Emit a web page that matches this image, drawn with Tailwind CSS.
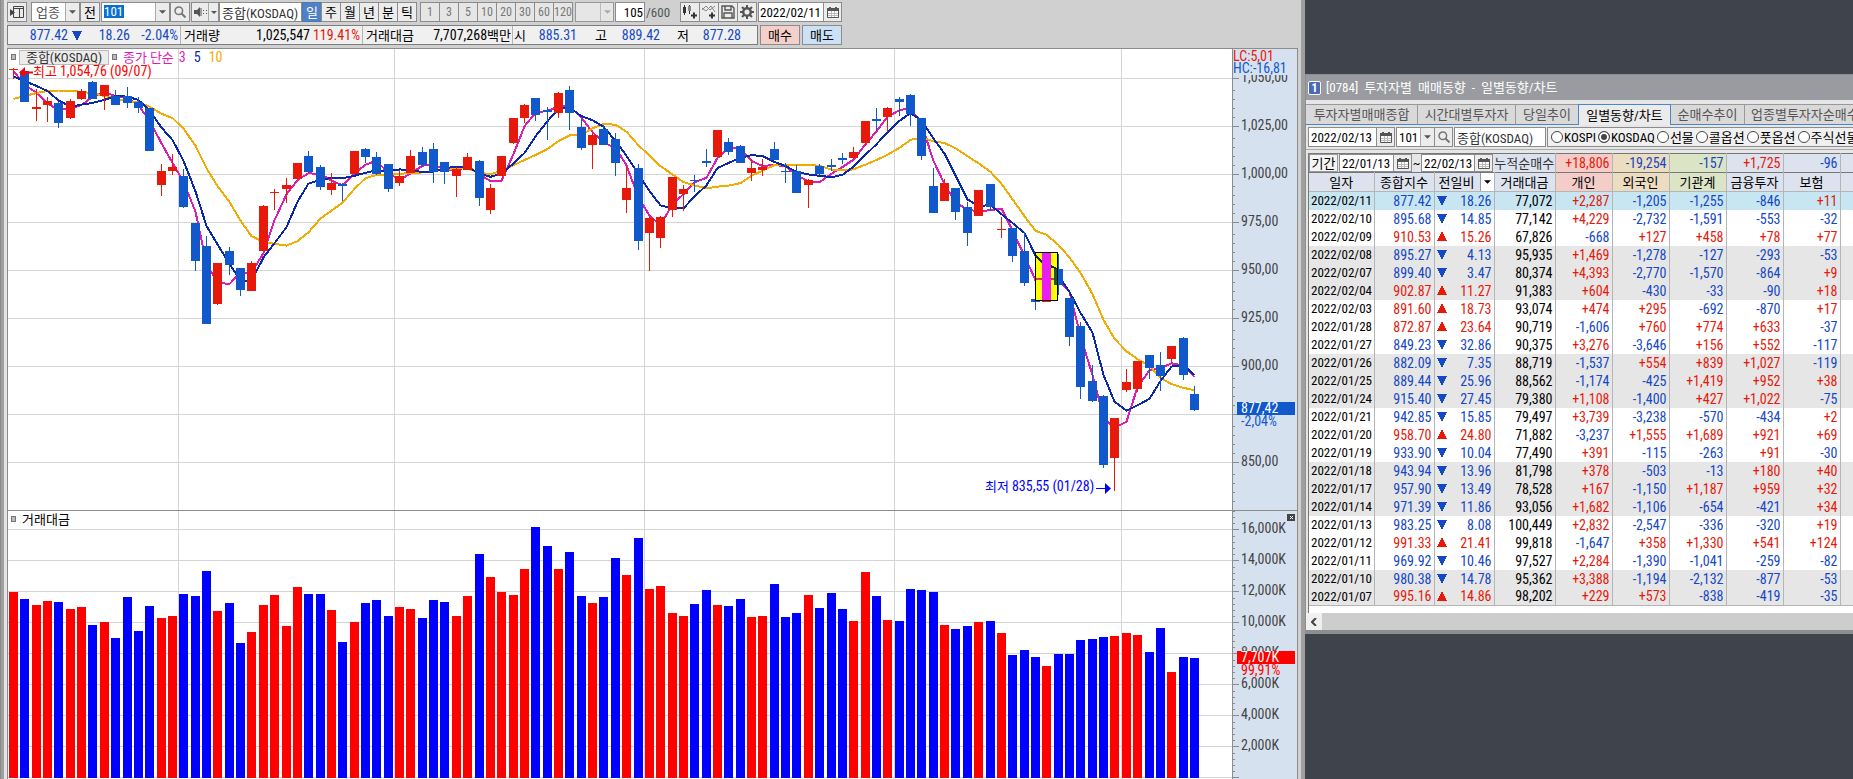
<!DOCTYPE html>
<html lang="ko">
<head>
<meta charset="utf-8">
<title>종합(KOSDAQ)</title>
<script src="https://cdn.jsdelivr.net/npm/@tailwindcss/browser@4"></script>
</head>
<body class="flex min-h-screen overflow-hidden bg-[#3f434c] font-['Liberation_Sans_Narrow','Roboto_Condensed','Noto_Sans_CJK_KR',sans-serif] text-[13px] leading-none text-black">

<svg class="hidden">
  <defs>
    <symbol id="cal" viewBox="0 0 12 11"><path d="M.5 1.500h11v9H.5z" fill="#fff" stroke="#555"/><path d="M0 1h12v3H0z" fill="#555"/><path d="M2 0h2v2H2zM8 0h2v2H8z" fill="#555"/><path d="M1 6.500h10M1 8.500h10M4.500 4v6M7.500 4v6" stroke="#bbb"/></symbol>
    <symbol id="mag" viewBox="0 0 12 12"><circle cx="4.800" cy="4.800" r="3.800" fill="none" stroke="#777" stroke-width="1.500"/><path d="M7.500 7.500l4 4" stroke="#777" stroke-width="2"/></symbol>
    <symbol id="down" viewBox="0 0 8 4"><path d="M0 0h8L4 4z" fill="currentColor"/></symbol>
    <symbol id="tdown" viewBox="0 0 10 9"><path d="M0 0h10v1H9v2H8v2H7v2H6v2H4V7H3V5H2V3H1V1H0z" fill="#1548c4"/></symbol>
    <symbol id="tup" viewBox="0 0 10 9"><path d="M0 9h10V8H9V6H8V4H7V2H6V0H4v2H3v2H2v2H1v2H0z" fill="#e6190a"/></symbol>
  </defs>
</svg>

<main class="flex min-w-0 flex-1 flex-col border-l border-[#8a8a8a] bg-[#d0d0d0]">
  <div class="flex min-h-screen flex-1 border-r-4 border-l-3 border-[#a09f9f]">
  <div class="flex min-w-0 flex-1 flex-col border-l-3 border-[#e4e4e4]">

    <div class="flex h-[22px] items-end">
      <button aria-label="창 목록" class="grid h-5 w-5 shrink-0 place-items-center border border-[#8c8c8c] bg-[#ececec]"><svg class="h-3 w-[14px]" viewBox="0 0 14 12"><path d="M3.500.500h10v11h-10zM3.500 2.500h10M9.500 3v8" fill="none" stroke="#444"/><path d="M0 3l5 3.500L0 10z" fill="#444"/></svg></button>
      <div class="relative ml-1 h-5 w-[49px] shrink-0">
        <select aria-label="종류" class="h-full w-full appearance-none border border-[#8c8c8c] bg-white pl-1 text-[#555]"><option>업종</option></select>
        <span class="pointer-events-none absolute inset-y-px right-px grid w-[14px] place-items-center border-l border-[#aaa] bg-[#ececec] text-[#555]"><svg class="h-1 w-[7px]"><use href="#down"/></svg></span>
      </div>
      <button class="h-5 w-5 shrink-0 border border-[#8c8c8c] bg-[#ececec]">전</button>
      <div class="relative ml-px flex h-5 w-[69px] shrink-0 border border-[#8c8c8c] bg-white">
        <input id="code" aria-label="업종 코드" value="101" class="mt-[2px] ml-[2px] h-[13px] w-5 bg-[#0a70d0] text-white">
        <button aria-label="코드 목록" class="ml-auto grid w-[14px] place-items-center border-l border-[#aaa] bg-[#ececec] text-[#555]"><svg class="h-1 w-[7px]"><use href="#down"/></svg></button>
      </div>
      <button aria-label="검색" class="grid h-5 w-5 shrink-0 place-items-center border border-[#8c8c8c] bg-[#ececec]"><svg class="size-3"><use href="#mag"/></svg></button>
      <button aria-label="소리" class="ml-px flex h-5 w-[28px] shrink-0 items-center border border-[#8c8c8c] bg-[#ececec] pl-[2px] text-[#555]"><svg class="h-3 w-[14px] shrink-0" viewBox="0 0 14 12"><path d="M0 4h3l3-3v10L3 8H0z" fill="#555"/><path d="M7 2v8" stroke="#555"/><path d="M9 4h1v1H9zM12 4h1v1h-1zM9 7h1v1H9zM12 7h1v1h-1z" fill="#555"/></svg><span class="grid h-full flex-1 place-items-center border-l border-[#aaa]"><svg class="h-[3px] w-[6px]"><use href="#down"/></svg></span></button>
      <input aria-label="종목명" value="종합(KOSDAQ)" class="h-5 w-[83px] shrink-0 border border-[#8c8c8c] bg-white pl-[2px] text-[#333]">
      <div id="periods" class="flex shrink-0"></div>
      <div id="mins" class="ml-[4px] flex shrink-0"></div>
      <div class="relative ml-[3px] h-5 w-[39px] shrink-0">
        <select aria-label="사용자 주기" disabled class="h-full w-full appearance-none border border-[#999] bg-[#e6e6e6]"><option></option></select>
        <span class="pointer-events-none absolute inset-y-px right-px grid w-[13px] place-items-center border-l border-[#bbb] text-[#aaa]"><svg class="h-1 w-[7px]"><use href="#down"/></svg></span>
      </div>
      <input aria-label="봉 개수" value="105" class="ml-px h-5 w-[30px] shrink-0 border border-[#8c8c8c] bg-white pr-px text-right">
      <span class="flex h-5 w-[35px] shrink-0 items-center pl-px text-[#555]">/600</span>
      <button aria-label="차트 추가" class="grid h-5 w-5 shrink-0 place-items-center border border-[#8c8c8c] bg-[#ececec]"><svg class="h-4 w-4" viewBox="0 0 16 16"><path d="M2.500 1v10M7.500 1v9" stroke="#333"/><path d="M1 3h3v6H1z" fill="#333"/><path d="M6 2h3v5H6z" fill="#888"/><path d="M9 11.500h6M12 8.500v6" stroke="#333" stroke-width="2"/></svg></button>
      <button aria-label="지표 추가" class="-ml-px grid h-5 w-5 shrink-0 place-items-center border border-[#8c8c8c] bg-[#ececec]"><svg class="h-4 w-4" viewBox="0 0 16 16"><path d="M1 6l4-4 4 4 5-4M1 4l4 3 5-5 4 6" fill="none" stroke="#888"/><path d="M8 11.500h6M11 8.500v6" stroke="#333" stroke-width="2"/></svg></button>
      <button aria-label="저장" class="-ml-px grid h-5 w-5 shrink-0 place-items-center border border-[#8c8c8c] bg-[#ececec]"><svg class="h-[14px] w-[14px]" viewBox="0 0 14 14"><path d="M1 1h10l2 2v10H1zM4 1v4h6V1M3 13V8h8v5" fill="none" stroke="#555" stroke-width="1.400"/></svg></button>
      <button aria-label="설정" class="-ml-px grid h-5 w-5 shrink-0 place-items-center border border-[#8c8c8c] bg-[#ececec]"><svg class="h-[14px] w-[14px]" viewBox="0 0 14 14"><circle cx="7" cy="7" r="3.800" fill="none" stroke="#555" stroke-width="2.500"/><path d="M7 0v3M7 11v3M0 7h3M11 7h3M2 2l2 2M10 10l2 2M12 2l-2 2M4 10l-2 2" stroke="#555" stroke-width="2"/></svg></button>
      <div class="ml-px flex h-5 w-[84px] shrink-0 border border-[#8c8c8c] bg-white"><input aria-label="날짜" value="2022/02/11" class="min-w-0 flex-1 pl-px"><button aria-label="달력" class="grid w-[18px] place-items-center border-l border-[#8c8c8c] bg-[#ececec]"><svg class="h-[11px] w-3"><use href="#cal"/></svg></button></div>
    </div>

    <div class="flex h-[26px] items-end pb-[3px]">
      <div class="flex h-5 shrink-0 items-center border border-[#7d7d7d] bg-[#f0f0f0] text-[14px] text-[#1548c4]">
        <span class="w-[60px] text-right">877.42</span><svg class="ml-1 h-[9px] w-[10px]"><use href="#tdown"/></svg>
        <span class="w-[48px] text-right">18.26</span><span class="w-[48px] text-right">-2.04%</span>
        <span class="ml-[2px] flex h-[18px] w-[42px] items-center border-l border-[#b5b5b5] pl-[3px] text-[13px] text-black">거래량</span>
        <span class="w-[88px] text-right text-black">1,025,547</span><span class="w-[50px] text-right text-[#e6190a]">119.41%</span>
        <span class="ml-[2px] flex h-[18px] w-[56px] items-center border-l border-[#b5b5b5] pl-[3px] text-[13px] text-black">거래대금</span>
        <span class="w-[93px] text-right text-black">7,707,268<span class="text-[13px]">백만</span></span>
        <span class="ml-px flex h-[18px] w-[17px] items-center border-l border-[#b5b5b5] pl-px text-[13px] text-black">시</span>
        <span class="w-[48px] text-right">885.31</span>
        <span class="ml-[18px] w-[16px] text-[13px] text-black">고</span><span class="w-[49px] text-right">889.42</span>
        <span class="ml-[17px] w-[16px] text-[13px] text-black">저</span><span class="mr-[16px] w-[48px] text-right">877.28</span>
      </div>
      <button class="ml-[2px] h-5 w-10 shrink-0 border border-[#8c8c8c] bg-[#f5d0cb]">매수</button>
      <button class="ml-[2px] h-5 w-10 shrink-0 border border-[#8c8c8c] bg-[#cbe1f5]">매도</button>
    </div>

    <div class="mr-[3px] flex min-h-0 flex-1 flex-col border-t border-r border-l border-[#8c8c8c] bg-white">
      <div class="flex h-[462px] shrink-0 border-b border-[#8c8c8c]">
        <div class="relative min-w-0 flex-1">
          <svg id="price" class="h-full w-full"></svg>
          <div class="absolute top-0 left-0 flex h-4 items-center text-[14px]">
            <span class="ml-[3px] h-[6px] w-[5px] border border-[#777] bg-[#bbb]"></span>
            <button class="ml-[3px] flex h-[15px] w-[90px] items-center justify-center border border-[#bbb] bg-[#ececec] text-[13px] text-[#333]">종합(KOSDAQ)</button>
            <span class="ml-[3px] h-[6px] w-[5px] border border-[#777] bg-[#bbb]"></span>
            <span class="ml-[6px] text-[13px] text-[#dd1cb6]">종가 단순</span><span class="ml-[5px] text-[#dd1cb6]">3</span><span class="ml-2 text-[#0a28a8]">5</span><span class="ml-2 text-[#f2ab00]">10</span>
          </div>
        </div>
        <svg id="paxis" class="h-full w-[65px] shrink-0 bg-[#d6e1f0]"></svg>
      </div>
      <div class="flex min-h-[268px] flex-1">
        <div class="relative min-w-0 flex-1">
          <svg id="volume" class="h-full w-full"></svg>
          <div class="absolute top-0 left-0 flex h-4 items-center"><span class="ml-[3px] h-[6px] w-[5px] border border-[#777] bg-[#bbb]"></span><span class="ml-[6px]">거래대금</span></div>
        </div>
        <div class="relative w-[65px] shrink-0 bg-[#d6e1f0]">
          <svg id="vaxis" class="h-full w-full"></svg>
          <button aria-label="닫기" class="absolute top-[3px] right-[2px] grid h-[7px] w-2 place-items-center bg-[#444]"><svg class="size-[5px]" viewBox="0 0 5 5"><path d="M1 1l3 3M4 1L1 4" stroke="#fff"/></svg></button>
        </div>
      </div>
    </div>
  </div>
  </div>
</main>

<aside class="mt-[74px] h-[560px] w-[548px] shrink-0 overflow-hidden border-t border-b-4 border-l border-[#8d8e90] bg-[#e6e6e6]">
  <h1 class="flex h-[25px] items-center bg-[#999ba0] text-[13px] whitespace-pre text-white"><span class="mr-[5px] ml-[2px] grid h-[14px] w-[13px] place-items-center rounded-xs border border-white bg-[#4a6cb5] text-[12px] font-bold">1</span>[0784]  투자자별  매매동향  -  일별동향/차트</h1>
  <nav class="mt-[4px] flex h-[21px] w-[600px] text-[#555]">
    <a href="#" class="flex w-[112px] items-center justify-center border-t border-r border-b border-t-[#999] border-r-[#999] border-b-[#4a86cc] bg-[#d9d9d9]">투자자별매매종합</a>
    <a href="#" class="flex w-[98px] items-center justify-center border-t border-r border-b border-t-[#999] border-r-[#999] border-b-[#4a86cc] bg-[#d9d9d9]">시간대별투자자</a>
    <a href="#" class="flex w-[62px] items-center justify-center border-t border-b border-t-[#999] border-b-[#4a86cc] bg-[#d9d9d9]">당일추이</a>
    <a href="#" class="flex w-[93px] items-center justify-center border-t border-r border-l border-[#4a86cc] bg-[#ebebeb] text-black">일별동향/차트</a>
    <a href="#" class="flex w-[74px] items-center justify-center border-t border-r border-b border-t-[#999] border-r-[#999] border-b-[#4a86cc] bg-[#d9d9d9]">순매수추이</a>
    <a href="#" class="flex w-[130px] items-center border-t border-b border-t-[#999] border-b-[#4a86cc] bg-[#d9d9d9] pl-[6px]">업종별투자자순매수</a>
  </nav>
  <form class="mt-[2px] flex h-[23px] w-[600px] border-b border-[#aaa] pl-[2px]">
    <div class="flex h-5 w-[87px] border border-[#8c8c8c] bg-white"><input aria-label="기준일" value="2022/02/13" class="min-w-0 flex-1 pl-[2px]"><button type="button" aria-label="달력" class="grid w-[18px] place-items-center border-l border-[#8c8c8c] bg-[#ececec]"><svg class="h-[11px] w-3"><use href="#cal"/></svg></button></div>
    <div class="ml-px flex h-5 w-[57px] border border-[#8c8c8c] bg-white"><input aria-label="코드" value="101" class="min-w-0 flex-1 pl-[2px]"><button type="button" aria-label="목록" class="grid w-[14px] place-items-center border-l border-[#aaa] bg-[#ececec] text-[#555]"><svg class="h-1 w-[7px]"><use href="#down"/></svg></button><button type="button" aria-label="검색" class="grid w-[18px] place-items-center border-l border-[#8c8c8c] bg-[#ececec]"><svg class="size-3"><use href="#mag"/></svg></button></div>
    <input aria-label="종목명" value="종합(KOSDAQ)" class="ml-px h-5 w-[92px] border border-[#8c8c8c] bg-white pl-[2px] text-[#333]">
    <div id="markets" class="ml-px flex h-5 w-[330px] items-center border border-[#8c8c8c] bg-[#f0f0f0] pl-[3px]"></div>
  </form>
  <div class="mt-[3px] ml-[2px] h-[460px] w-[600px] border-l border-[#777] bg-white">
    <table class="w-[600px] table-fixed border-collapse">
      <colgroup><col class="w-[65px]"><col class="w-[60px]"><col class="w-[60px]"><col class="w-[61px]"><col class="w-[57px]"><col class="w-[57px]"><col class="w-[57px]"><col class="w-[57px]"><col class="w-[57px]"><col></colgroup>
      <thead>
        <tr class="h-[19px] border-t border-b border-[#777] bg-[#dce3ee] text-[14px]">
          <td colspan="3" class="bg-[#e6e6e6] p-0 text-[13px]"><div class="flex h-[18px] items-center"><button class="h-[18px] w-[29px] border border-[#999] bg-[#f4f4f4]">기간</button>
            <div class="ml-px flex h-[18px] w-[73px] border border-[#8c8c8c] bg-white"><input aria-label="시작일" value="22/01/13" class="min-w-0 flex-1 pl-[2px]"><button aria-label="달력" class="grid w-[18px] place-items-center border-l border-[#8c8c8c] bg-[#ececec]"><svg class="h-[11px] w-3"><use href="#cal"/></svg></button></div><span class="w-[9px] text-center">~</span>
            <div class="flex h-[18px] w-[72px] border border-[#8c8c8c] bg-white"><input aria-label="종료일" value="22/02/13" class="min-w-0 flex-1 pl-[2px]"><button aria-label="달력" class="grid w-[18px] place-items-center border-l border-[#8c8c8c] bg-[#ececec]"><svg class="h-[11px] w-3"><use href="#cal"/></svg></button></div></div></td>
          <td class="border-r border-[#b5b5b5] p-0 text-center text-[13px] whitespace-nowrap text-[#333]">누적순매수</td>
          <td class="border-r border-[#b5b5b5] bg-[#f5cdc8] p-0 pr-[2px] text-right text-[#e6190a]">+18,806</td>
          <td class="border-r border-[#b5b5b5] bg-[#ecdcc0] p-0 pr-[2px] text-right text-[#1548c4]">-19,254</td>
          <td class="border-r border-[#b5b5b5] bg-[#dbe4c4] p-0 pr-[2px] text-right text-[#1548c4]">-157</td>
          <td class="border-r border-[#b5b5b5] p-0 pr-[2px] text-right text-[#e6190a]">+1,725</td>
          <td class="border-r border-[#b5b5b5] p-0 pr-[2px] text-right text-[#1548c4]">-96</td><td class="p-0"></td>
        </tr>
        <tr class="h-[19px] border-b border-[#b5b5b5] bg-[#dce3ee]">
          <th class="border-r border-[#b5b5b5] p-0 font-normal">일자</th><th class="border-r border-[#b5b5b5] p-0 font-normal">종합지수</th>
          <th class="border-r border-[#b5b5b5] p-0 font-normal"><div class="flex h-[18px] items-center pl-1">전일비<button aria-label="선택" class="ml-auto grid h-[18px] w-[14px] place-items-center border-l border-[#999] bg-white"><svg class="h-1 w-[7px]"><use href="#down"/></svg></button></div></th>
          <th class="border-r border-[#b5b5b5] p-0 font-normal">거래대금</th><th class="border-r border-[#b5b5b5] bg-[#f5cdc8] p-0 font-normal">개인</th><th class="border-r border-[#b5b5b5] bg-[#ecdcc0] p-0 font-normal">외국인</th><th class="border-r border-[#b5b5b5] bg-[#dbe4c4] p-0 font-normal">기관계</th><th class="border-r border-[#b5b5b5] p-0 font-normal">금융투자</th><th class="border-r border-[#b5b5b5] p-0 font-normal">보험</th><th class="p-0"></th>
        </tr>
      </thead>
      <tbody id="rows" class="border-b border-[#b5b5b5] text-[14px]"></tbody>
    </table>
  </div>
  <div class="flex h-[17px] bg-[#cdcdcd]"><button aria-label="왼쪽으로" class="grid w-4 place-items-center bg-[#f0f0f0]"><svg class="h-2 w-[6px]" viewBox="0 0 6 8"><path d="M5 0L1 4l4 4" fill="none" stroke="#444" stroke-width="2"/></svg></button></div>
</aside>

<script>
const RED = '#e6190a', BLUE = '#1159cb';
const $ = id => document.getElementById(id);

// Period and minute buttons
const on = 'h-5 w-5 -mr-px border border-[#4a78b8] bg-[#4e81c6] text-white';
const off = 'h-5 w-5 -mr-px border border-[#8c8c8c] bg-[#ececec]';
const dim = 'h-5 w-5 -mr-px border border-[#8c8c8c] bg-[#e6e6e6] text-[12px] text-[#777]';
$('periods').innerHTML = ['일','주','월','년','분','틱'].map((t, i) => `<button class="${i ? off : on}">${t}</button>`).join('');
$('mins').innerHTML = ['1','3','5','10','20','30','60','120'].map(t => `<button class="${dim}">${t}</button>`).join('');

// Market radios
$('markets').innerHTML = ['KOSPI','KOSDAQ','선물','콜옵션','풋옵션','주식선물'].map((t, i) =>
  `<label class="mr-[2px] flex shrink-0 items-center gap-px whitespace-nowrap"><input type="radio" name="m" ${i === 1 ? 'checked' : ''} class="size-3 appearance-none rounded-full border border-[#444] bg-white checked:border-[#444] checked:bg-[#444] checked:shadow-[inset_0_0_0_2px_#fff]">${t}</label>`).join('');

// Daily table: date, index, change (sign = direction), value, net buying by investor
const T = `2022/02/11 877.42 -18.26 77,072 +2,287 -1,205 -1,255 -846 +11
2022/02/10 895.68 -14.85 77,142 +4,229 -2,732 -1,591 -553 -32
2022/02/09 910.53 +15.26 67,826 -668 +127 +458 +78 +77
2022/02/08 895.27 -4.13 95,935 +1,469 -1,278 -127 -293 -53
2022/02/07 899.40 -3.47 80,374 +4,393 -2,770 -1,570 -864 +9
2022/02/04 902.87 +11.27 91,383 +604 -430 -33 -90 +18
2022/02/03 891.60 +18.73 93,074 +474 +295 -692 -870 +17
2022/01/28 872.87 +23.64 90,719 -1,606 +760 +774 +633 -37
2022/01/27 849.23 -32.86 90,375 +3,276 -3,646 +156 +552 -117
2022/01/26 882.09 -7.35 88,719 -1,537 +554 +839 +1,027 -119
2022/01/25 889.44 -25.96 88,562 -1,174 -425 +1,419 +952 +38
2022/01/24 915.40 -27.45 79,380 +1,108 -1,400 +427 +1,022 -75
2022/01/21 942.85 -15.85 79,497 +3,739 -3,238 -570 -434 +2
2022/01/20 958.70 +24.80 71,882 -3,237 +1,555 +1,689 +921 +69
2022/01/19 933.90 -10.04 77,490 +391 -115 -263 +91 -30
2022/01/18 943.94 -13.96 81,798 +378 -503 -13 +180 +40
2022/01/17 957.90 -13.49 78,528 +167 -1,150 +1,187 +959 +32
2022/01/14 971.39 -11.86 93,056 +1,682 -1,106 -654 -421 +34
2022/01/13 983.25 -8.08 100,449 +2,832 -2,547 -336 -320 +19
2022/01/12 991.33 +21.41 99,818 -1,647 +358 +1,330 +541 +124
2022/01/11 969.92 -10.46 97,527 +2,284 -1,390 -1,041 -259 -82
2022/01/10 980.38 -14.78 95,362 +3,388 -1,194 -2,132 -877 -53
2022/01/07 995.16 +14.86 98,202 +229 +573 -838 -419 -35`.split('\n').map(r => r.split(' '));
const red = 'text-[#e6190a]', blue = 'text-[#1548c4]';
$('rows').innerHTML = T.map((r, i) => {
  const bg = !i ? 'bg-[#c8e6f2]' : Math.floor(i / 3) % 2 ? 'bg-[#e6e6e6]' : 'bg-white';
  const c = r[2][0] === '+' ? red : blue;
  const td = (v, k) => `<td class="border-r border-[#b5b5b5] p-0 pr-[2px] text-right ${k}">${v}</td>`;
  return `<tr class="h-[18px] ${bg}"><td class="border-r border-[#b5b5b5] p-0 pl-[2px] text-[13px]">${r[0]}</td>${td(r[1], c)}<td class="border-r border-[#b5b5b5] p-0 pr-[2px] ${c}"><div class="flex items-center justify-between pl-[2px]"><svg class="h-[9px] w-[10px]"><use href="${c === red ? '#tup' : '#tdown'}"/></svg>${r[2].slice(1)}</div></td>${td(r[3], '')}${r.slice(4).map(v => td(v, v[0] === '+' ? red : blue)).join('')}<td class="p-0"></td></tr>`;
}).join('');

// Candles: direction, high, body top, body bottom, low (thirds of a pixel from the panel's top)
const C = `r55,57,62,87 b63,63,158,158 r118,171,177,215 r141,153,167,218 b157,159,221,236 r148,153,204,209 r117,123,147,150 b94,96,147,147 r105,105,138,180 b120,138,165,165 b111,138,159,174 b141,156,174,189 b174,174,303,303 r342,363,405,438 r312,351,363,375 b357,378,471,476 b519,519,633,663 b558,588,822,822 r639,639,762,765 b591,603,645,675 b654,654,720,738 r633,639,723,723 r465,468,603,603 r417,426,429,480 r384,405,417,459 r339,339,387,387 b303,318,366,369 b345,351,411,420 r369,399,420,435 b399,402,408,453 r303,303,372,372 b294,297,321,340 b306,321,372,375 b342,342,417,426 r362,378,399,408 r300,318,369,369 b291,306,345,353 b279,297,366,399 b336,336,366,402 r351,357,378,441 r309,321,360,360 b330,333,444,468 r402,414,480,492 r318,318,378,378 r204,204,279,282 r162,165,204,219 b144,144,195,213 b171,180,186,270 r126,129,189,204 b108,120,189,240 b204,231,294,300 r246,255,285,357 b225,237,285,285 b249,267,339,378 r348,414,450,489 b342,354,573,600 r498,504,549,663 r498,501,564,594 r381,381,480,501 r405,417,432,483 b375,390,393,426 b297,333,339,351 r240,240,321,321 b264,276,306,315 b285,288,339,339 r327,354,369,393 r327,351,360,378 b276,297,330,330 b339,363,366,399 b345,363,429,429 r387,390,405,474 b342,348,372,377 b327,345,353,365 b309,324,330,342 r291,306,324,327 r213,213,279,290 b174,207,213,243 r171,174,201,248 b141,147,156,198 b132,135,192,228 b204,204,318,330 b354,408,489,489 r387,399,453,453 b414,414,486,510 b456,471,549,588 r420,420,498,498 b402,402,471,483 r501,537,540,564 b534,534,618,636 b548,603,699,708 b747,747,756,782 r607,610,756,756 b612,657,705,735 b744,744,861,888 b816,828,1011,1047 b945,993,1053,1056 b1035,1038,1245,1254 r1104,1104,1224,1323 r957,996,1020,1026 r933,933,1017,1026 b915,915,954,987 b906,945,978,1023 r888,888,927,940 b861,864,975,990 b1008,1032,1080,1083`
  .split(' ').map(s => [s[0], ...s.slice(1).split(',').map(v => Math.floor(v / 3) + 1)]);
const X = i => Math.floor(5.5 + i * 11.355);
const close = C.map(c => c[0] === 'r' ? c[2] : c[3]);
const ma = (n, seed) => close.map((_, i) => i < n - 1 ? seed[i] : close.slice(i - n + 1, i + 1).reduce((a, b) => a + b) / n);
const rect = (x, y, w, h, f) => `<rect x="${x}" y="${y}" width="${w}" height="${h}" fill="${f}"/>`;
const poly = (m, col) => `<polyline points="${m.map((y, i) => (X(i) + .5) + ',' + y.toFixed(1)).join(' ')}" fill="none" stroke="${col}" stroke-width="2"/>`;
const text = (x, y, t, f) => `<text x="${x}" y="${y}" font-size="14" fill="${f}">${t}</text>`;
const V = [170, 386, 636, 886, 1113];
const grid = (ys) => V.map(x => rect(x, 0, 1, '100%', '#d4d4d4')).join('') + ys.map(y => rect(0, y, '100%', 1, '#d4d4d4')).join('');
const P = Array.from({length: 9}, (_, i) => 29 + 48 * i);

let s = '<g shape-rendering="crispEdges">' + grid(P);
s += poly(ma(3, [22, 36]), '#dd1cb6') + poly(ma(10, [50, 47, 44, 42, 41.5, 41.5, 43, 44, 47]), '#f2ab00') + poly(ma(5, [27.5, 32, 37, 42]), '#0a28a8');
C.forEach(([d, h, t, b, l], i) => {
  const f = d === 'r' ? RED : BLUE;
  s += rect(X(i), h, 1, Math.max(l - h, 1), f) + rect(X(i) - 4, t, 9, Math.max(b - t, 1), f);
});
// Highlighted candle
s += '<rect x="1027.5" y="203.5" width="22" height="48" fill="#ffff00" stroke="#000"/>';
s += '<path d="M1028 230h21" stroke="#d83c3c" stroke-width="2"/><path d="M1028 207l6 6 15 7" fill="none" stroke="#0c2a4a" stroke-width="2"/>';
s += rect(1046, 220, 3, 16, '#145a36') + rect(1034, 204, 9, 47, '#ea1df5') + '</g>';
s += '<path d="M11 23.500l6-5.500v11z" fill="#f00"/><path d="M16 23.500h9" stroke="#f00" stroke-width="2"/>';
s += `<text x="25" y="27" font-size="13" fill="#f00">최고 <tspan font-size="14">1,054,76 (09/07)</tspan></text>`;
s += `<text x="977" y="442" font-size="13" fill="#00f">최저 <tspan font-size="14">835,55 (01/28)</tspan></text>`;
s += '<path d="M1088 439.500h10" stroke="#00f" stroke-width="1"/><path d="M1103 439.500l-6-5.500v11z" fill="#00f"/>';
$('price').innerHTML = s;

// Price axis
s = '<g shape-rendering="crispEdges">' + rect(0, 0, 1, '100%', '#8c8c8c');
P.forEach(y => { s += rect(0, y, 7, 1, '#8c8c8c'); [12, 21, 30, 39].forEach(d => s += rect(0, y + d, 3, 1, '#8c8c8c')); });
s += '</g>';
['1,050,00','1,025,00','1,000,00','975,00','950,00','925,00','900,00','','850,00'].forEach((t, i) => s += text(9, P[i] + 4, t, '#444'));
s += rect(1, 0, 64, 26, '#d6e1f0') + text(1, 12, 'LC:5,01', RED) + text(1, 24, 'HC:-16,81', BLUE);
s += rect(5, 353, 58, 13, BLUE) + text(9, 364, '877,42', '#fff') + text(9, 377, '-2,04%', BLUE);
$('paxis').innerHTML = s;

// Trading value bars: colour and top (thirds of a pixel)
const B = 'r276 b297 r315 r303 b306 r327 r321 b375 r366 b414 b291 b393 b318 r354 r348 b282 b288 b213 r333 b309 b429 r396 r315 r285 r378 r261 b282 b282 r330 b426 r366 b309 b300 b348 r321 r327 b354 b300 b306 r348 r288 b162 r231 r276 r285 r207 b81 b138 r207 b156 b288 r309 b291 b174 r225 b114 r267 r258 r339 r348 b312 b270 r315 b318 b297 r351 r348 b252 b351 b339 r285 b324 b279 b327 r363 r216 b288 r360 b363 b267 b270 b276 r375 b387 b378 r366 b363 r399 b465 b450 b471 r498 b462 b462 b420 b417 b411 r408 r399 r405 b456 b384 r516 b471 b474'.split(' ');
const Q = Array.from({length: 9}, (_, i) => 18 + 31 * i);
s = '<g shape-rendering="crispEdges">' + grid(Q);
B.forEach((b, i) => { const y = Math.round(b.slice(1) / 3) - 11; s += rect(X(i) - 4, y, 9, 267 - y, b[0] === 'r' ? '#f00' : '#00f'); });
$('volume').innerHTML = s + '</g>';
s = '<g shape-rendering="crispEdges">' + rect(0, 0, 1, '100%', '#8c8c8c');
[-13, ...Q].forEach(y => { s += rect(0, y, 7, 1, '#8c8c8c'); [7, 13, 19, 25].forEach(d => s += rect(0, y + d, 3, 1, '#8c8c8c')); });
s += '</g>';
Q.slice(0, 8).forEach((y, i) => s += text(9, y + 4, (16 - 2 * i) + ',000K', '#444'));
s += rect(5, 140, 58, 13, '#f00') + text(9, 151, '7,707K', '#fff') + text(9, 164, '99,91%', '#f00');
$('vaxis').innerHTML = s;
</script>
</body>
</html>
